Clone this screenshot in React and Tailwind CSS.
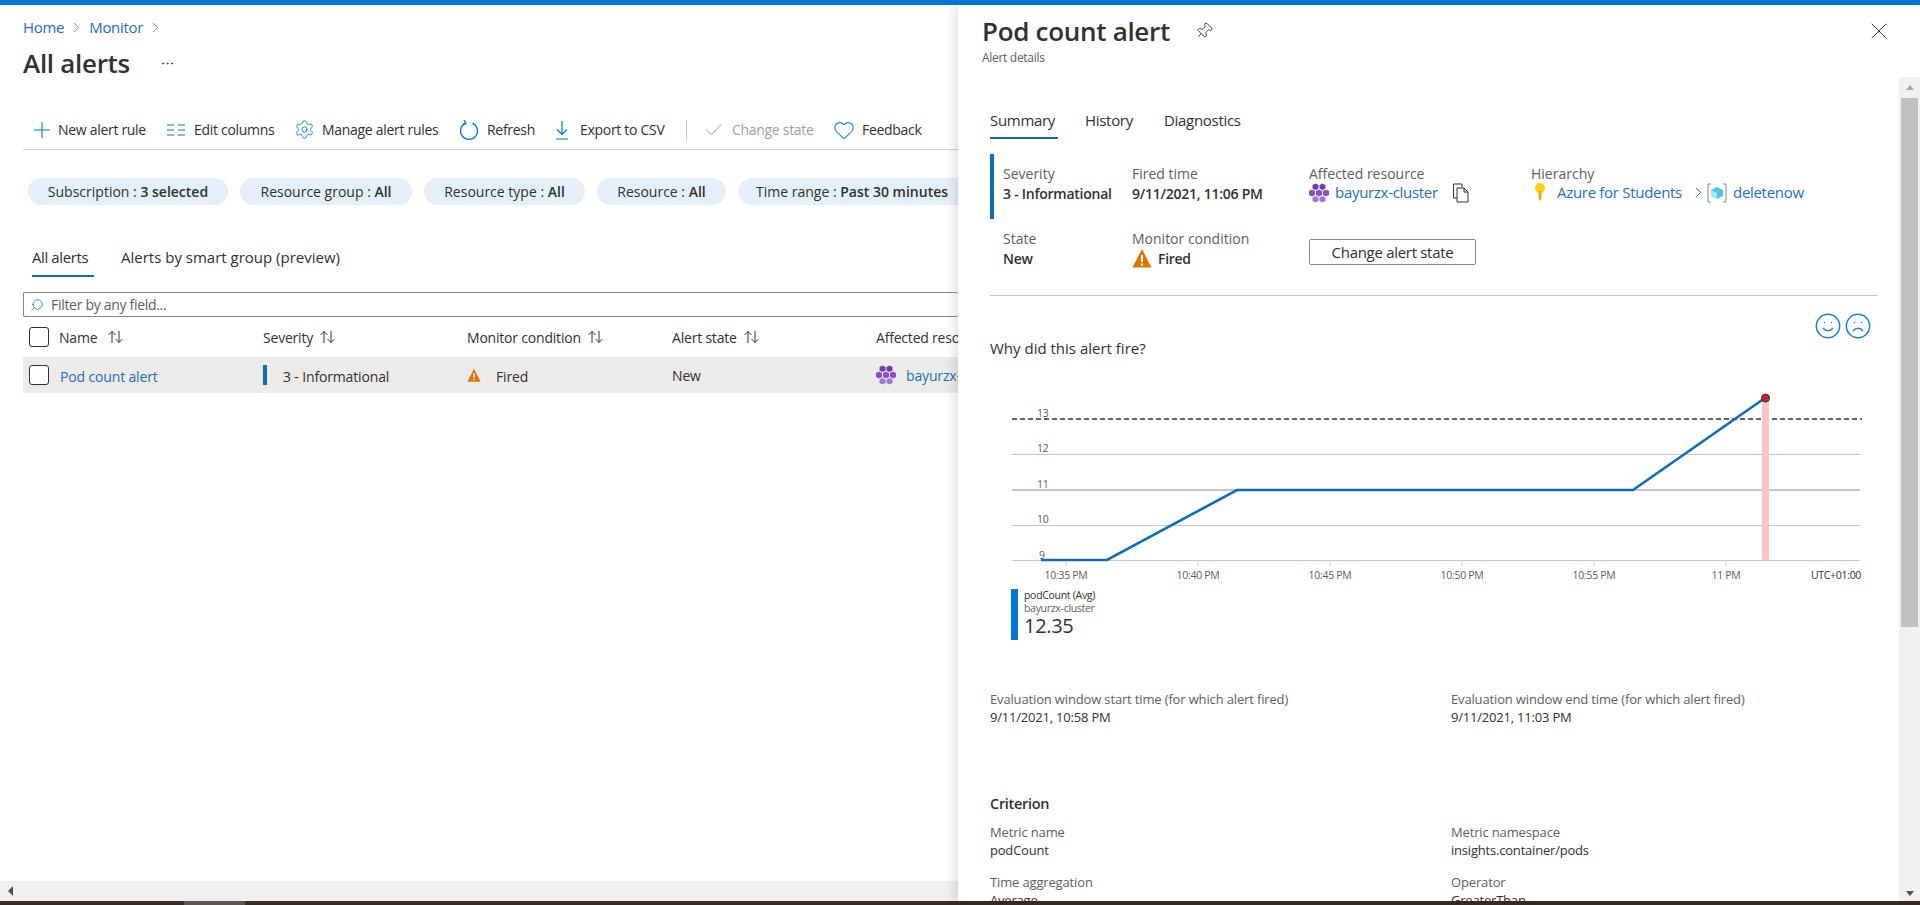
import React from "react";
import { Plus, Settings, Heart, Check, Pin, X, Smile, Frown, Search, ChevronRight, MoreHorizontal } from "lucide-react";

const Sort = () => (
  <svg width="18" height="14" viewBox="0 0 18 14" fill="none" stroke="#323130" strokeWidth="1" className="shrink-0">
    <path d="M5 13V1.5M1.5 5L5 1.5 8.5 5" />
    <path d="M12 1v11.5M8.5 9l3.5 3.5L15.5 9" />
  </svg>
);

const Warn = ({ s = 14 }) => (
  <svg width={s} height={s} viewBox="0 0 20 20" className="shrink-0">
    <path d="M10 1L19.5 19.5H.5z" fill="#db7500" />
    <path d="M10 7v7M10 15.5v2" stroke="#fff" strokeWidth="2" />
  </svg>
);

const Kube = ({ s = 20 }) => (
  <svg width={s} height={s} viewBox="0 0 20 20" className="shrink-0">
    <path d="M6.5 0.5L9.5 2v3.5L6.5 7 3.5 5.5V2z" fill="#6f3bb0" />
    <path d="M13.5 0.5L16.5 2v3.5L13.5 7 10.5 5.5V2z" fill="#6f3bb0" />
    <path d="M3 6.5L6 8v4L3 13.5 0 12V8z" fill="#8a4fc9" />
    <path d="M10 6.5L13 8v4l-3 1.5L7 12V8z" fill="#8a4fc9" />
    <path d="M17 6.5L20 8v4l-3 1.5L14 12V8z" fill="#8a4fc9" />
    <path d="M6.5 13L9.5 14.5V18L6.5 19.5 3.5 18v-3.5z" fill="#a277d8" />
    <path d="M13.5 13L16.5 14.5V18L13.5 19.5 10.5 18v-3.5z" fill="#a277d8" />
  </svg>
);

const Box = () => <div className="w-[20px] h-[20px] rounded-[3px] border border-[#323130] bg-white shrink-0" />;

const Pill = ({ label, value, w }) => (
  <div className={`h-[27px] rounded-full bg-[#e4f0f9] flex items-center text-[14px] tracking-normal text-[#323130] whitespace-nowrap shrink-0 ${w}`}>
    {label} :&nbsp;<span className="font-semibold">{value}</span>
  </div>
);

const Label = ({ children }) => <div className="h-[18px] leading-[18px] text-[14px] tracking-normal text-[#605e5c] whitespace-nowrap">{children}</div>;
const Small = ({ children }) => <div className="h-[18px] leading-[18px] text-[13px] tracking-[-0.15px] text-[#605e5c] whitespace-nowrap">{children}</div>;
const Value = ({ children }) => <div className="h-[18px] leading-[18px] text-[13px] tracking-[-0.2px] text-[#323130] whitespace-nowrap">{children}</div>;
const Strong = ({ children }) => <div className="h-[19px] leading-[21px] text-[14px] tracking-[-0.25px] font-semibold whitespace-nowrap">{children}</div>;

export default function App() {
  return (
    <div className="w-[1920px] h-[905px] flex flex-col overflow-hidden bg-white font-['Open_Sans','Liberation_Sans',sans-serif] tracking-[-0.3px] text-[#323130]">
      <div className="h-[5px] bg-[#0078d4] shrink-0" />
      <div className="flex-1 flex min-h-0">
        {/* Left blade */}
        <div className="w-[958px] shrink-0 flex flex-col overflow-hidden">
          <div className="flex-1 min-h-0 pl-[23px] overflow-hidden">
            <div className="mt-[13px] h-[18px] flex items-center gap-[4px] text-[15px] text-[#1f6fb5]">
              <span>Home</span>
              <ChevronRight size={17} strokeWidth={1} color="#605e5c" />
              <span>Monitor</span>
              <ChevronRight size={17} strokeWidth={1} color="#605e5c" />
            </div>
            <div className="mt-[9px] h-[36px] flex items-center">
              <span className="text-[26px] font-semibold w-[137px] whitespace-nowrap">All alerts</span>
              <MoreHorizontal size={15} strokeWidth={1.2} color="#323130" />
            </div>
            <div className="mt-[30px] h-[39px] border-b border-[#d2d0ce] flex items-center pl-[6px] pb-[1px] text-[14px] whitespace-nowrap">
              <Plus size={26} strokeWidth={1} color="#0078d4" />
              <span className="ml-[3px] w-[108px]">New alert rule</span>
              <svg width="20" height="14" viewBox="0 0 20 14" stroke="#0078d4" strokeWidth="1.2">
                <path d="M1 2h7M1 7h7M1 12h7M12 2h7M12 7h7M12 12h7" />
              </svg>
              <span className="ml-[8px] w-[100px]">Edit columns</span>
              <Settings size={21} strokeWidth={1} color="#0078d4" />
              <span className="ml-[7px] w-[137px]">Manage alert rules</span>
              <svg width="20" height="22" viewBox="0 0 20 22" fill="none" stroke="#0078d4" strokeWidth="1.3">
                <path d="M6.5 4.2A8.5 8.5 0 1 0 13.5 4.2" />
                <path d="M5 1l2 3.5L3.5 6" />
              </svg>
              <span className="ml-[8px] w-[66px]">Refresh</span>
              <svg width="18" height="20" viewBox="0 0 18 20" fill="none" stroke="#0078d4" strokeWidth="1.2">
                <path d="M9 1v13M4 9.5L9 14.5 14 9.5M3 19h12" />
              </svg>
              <span className="ml-[9px] w-[106px]">Export to CSV</span>
              <div className="w-px h-[20px] bg-[#c8c6c4] mr-[16px]" />
              <Check size={22} strokeWidth={0.9} color="#8a8886" />
              <span className="ml-[7px] w-[101px] text-[#a19f9d]">Change state</span>
              <Heart size={22} strokeWidth={1.1} color="#0078d4" />
              <span className="ml-[7px]">Feedback</span>
            </div>
            <div className="mt-[28px] flex gap-[12px] pl-[5px]">
              <Pill label="Subscription" value="3 selected" w="w-[200px] justify-center" />
              <Pill label="Resource group" value="All" w="w-[172px] justify-center" />
              <Pill label="Resource type" value="All" w="w-[161px] justify-center" />
              <Pill label="Resource" value="All" w="w-[129px] justify-center" />
              <Pill label="Time range" value="Past 30 minutes" w="w-[240px] pl-[18px]" />
            </div>
            <div className="mt-[40px] h-[32px] flex pl-[9px] gap-[27px] text-[15px] whitespace-nowrap">
              <div className="h-[32px] border-b-2 border-[#0f6cbd] font-medium leading-[24px] w-[62px] tracking-[-0.4px]">All alerts</div>
              <div className="leading-[24px] tracking-normal">Alerts by smart group (preview)</div>
            </div>
            <div className="mt-[15px] h-[25px] border border-[#8a8886] rounded-[2px] border-r-0 flex items-center pl-[6px] gap-[7px] text-[14px] text-[#605e5c]">
              <Search size={14} strokeWidth={1.3} color="#0078d4" className="-scale-x-100" />
              <span>Filter by any field...</span>
            </div>
            <div className="h-[40px] grid grid-cols-[234px_204px_205px_204px_1fr] items-center pl-[6px] text-[14px] tracking-[-0.2px] whitespace-nowrap">
              <div className="flex items-center">
                <Box />
                <span className="ml-[10px] w-[48px]">Name</span>
                <Sort />
              </div>
              <div className="flex items-center gap-[6px]"><span>Severity</span><Sort /></div>
              <div className="flex items-center gap-[6px]"><span>Monitor condition</span><Sort /></div>
              <div className="flex items-center gap-[6px]"><span>Alert state</span><Sort /></div>
              <div>Affected resource</div>
            </div>
            <div className="h-[36px] bg-[#edebe9] grid grid-cols-[234px_204px_205px_204px_1fr] items-center pl-[6px] text-[14px] tracking-[-0.15px] whitespace-nowrap">
              <div className="flex items-center">
                <Box />
                <span className="ml-[11px] pt-[2px] text-[#1f6fb5]">Pod count alert</span>
              </div>
              <div className="flex items-center">
                <div className="w-[4px] h-[20px] bg-[#0f6cbd] mr-[16px]" />
                <span className="pt-[2px]">3 - Informational</span>
              </div>
              <div className="flex items-center">
                <Warn s={14} />
                <span className="ml-[15px] pt-[2px]">Fired</span>
              </div>
              <div>New</div>
              <div className="flex items-center overflow-hidden">
                <Kube s={20} />
                <span className="ml-[10px] text-[#1f6fb5]">bayurzx-cluster</span>
              </div>
            </div>
          </div>
          <div className="h-[20px] bg-[#f0f0f0] shrink-0 flex items-center pl-[8px]">
            <div className="w-0 h-0 border-y-[5px] border-y-transparent border-r-[5px] border-r-[#505050]" />
          </div>
        </div>

        {/* Right blade */}
        <div className="flex-1 min-w-0 flex relative shadow-[-4px_0_10px_rgba(0,0,0,0.12)]">
          <div className="flex-1 min-w-0 overflow-hidden relative">
            <div className="pl-[24px] pr-[6px] pt-[8px]">
              <div className="h-[36px] flex items-center">
                <span className="text-[26px] font-semibold w-[213px] whitespace-nowrap">Pod count alert</span>
                <Pin size={18} strokeWidth={1.2} color="#323130" className="rotate-45" />
                <X size={28} strokeWidth={0.8} color="#323130" className="ml-auto" />
              </div>
              <div className="mt-[1px] h-[16px] leading-[16px] text-[12px] text-[#605e5c]">Alert details</div>
            </div>
            <div className="pl-[32px] pr-[64px]">
              <div className="mt-[42px] h-[31px] flex gap-[27px] text-[15px] leading-[24px] whitespace-nowrap">
                <div className="h-[31px] border-b-2 border-[#0f6cbd] font-medium w-[68px]">Summary</div>
                <div className="w-[49px]">History</div>
                <div className="ml-[3px]">Diagnostics</div>
              </div>
              <div className="mt-[15px] h-[65px] border-l-4 border-[#0f6cbd] pl-[9px] pt-[11px] flex">
                <div className="w-[129px]">
                  <Label>Severity</Label>
                  <Strong>3 - Informational</Strong>
                </div>
                <div className="w-[177px]">
                  <Label>Fired time</Label>
                  <Strong>9/11/2021, 11:06 PM</Strong>
                </div>
                <div className="w-[222px]">
                  <Label>Affected resource</Label>
                  <div className="h-[19px] flex items-center">
                    <Kube s={20} />
                    <span className="ml-[6px] text-[15px] text-[#1f6fb5] w-[117px] whitespace-nowrap">bayurzx-cluster</span>
                    <svg width="17" height="20" viewBox="0 0 17 20" fill="none" stroke="#323130" strokeWidth="1">
                      <path d="M10 4V1H1.5v14H5" />
                      <path d="M5 5h7l4 4v10H5z" />
                      <path d="M12 5v4h4" />
                    </svg>
                  </div>
                </div>
                <div>
                  <Label>Hierarchy</Label>
                  <div className="h-[19px] flex items-center whitespace-nowrap text-[15px] text-[#1f6fb5]">
                    <svg width="14" height="20" viewBox="0 0 14 20" className="ml-[2px] shrink-0">
                      <circle cx="7" cy="5" r="5" fill="#fcd116" />
                      <path d="M5.5 8h3v7l-1.5 3-1.5-3z" fill="#f2a900" />
                    </svg>
                    <span className="ml-[10px] w-[133px]">Azure for Students</span>
                    <ChevronRight size={17} strokeWidth={1.2} color="#323130" />
                    <svg width="20" height="20" viewBox="0 0 20 20" fill="none" className="shrink-0">
                      <path d="M4 1H1v18h3M16 1h3v18h-3" stroke="#8a8886" />
                      <path d="M10 4l6 3v6l-6 3-6-3V7z" fill="#50c7e8" />
                      <path d="M10 10v6l-6-3V7z" fill="#9cebff" />
                    </svg>
                    <span className="ml-[6px]">deletenow</span>
                  </div>
                </div>
              </div>
              <div className="mt-[11px] pl-[13px] flex h-[37px]">
                <div className="w-[129px]">
                  <Label>State</Label>
                  <Strong>New</Strong>
                </div>
                <div className="w-[177px]">
                  <Label>Monitor condition</Label>
                  <div className="h-[19px] flex items-center text-[14px] font-semibold">
                    <Warn s={20} />
                    <span className="ml-[6px] pt-[2px]">Fired</span>
                  </div>
                </div>
                <div className="mt-[9px] w-[167px] h-[26px] border border-[#8a8886] rounded-[2px] flex items-center justify-center text-[15px]">
                  Change alert state
                </div>
              </div>
              <div className="mt-[28px] h-px bg-[#c8c6c4] w-[887px]" />
              <div className="mt-[18px] h-[24px] w-[882px] flex justify-end gap-[2px]">
                <Smile size={28} strokeWidth={1.3} color="#1f7fc7" className="-mt-[2px]" />
                <Frown size={28} strokeWidth={1.3} color="#1f7fc7" className="-mt-[2px]" />
              </div>
              <div className="mt-[2px] h-[18px] leading-[16px] text-[15px] tracking-normal">Why did this alert fire?</div>
              <svg
                className="block mt-[32px] -ml-[17px] font-['Open_Sans','Liberation_Sans',sans-serif]"
                width="897"
                height="195"
                viewBox="973 390 897 195"
              >
                <g stroke="#c8c6c4" strokeWidth="1">
                  <path d="M1012 454.5H1860M1012 525.5H1860M1012 560.5H1860" />
                  <path d="M1012 490H1860" strokeWidth="2" />
                  <path d="M1066 560v6M1198 560v6M1330 560v6M1462 560v6M1594 560v6M1726 560v6" />
                </g>
                <path d="M1012 419H1862" stroke="#323130" strokeWidth="1.6" strokeDasharray="5 3" />
                <rect x="1762" y="398" width="7" height="162" fill="#fbc4c4" />
                <path d="M1041 560H1107L1237 490H1633L1765 398" fill="none" stroke="#0f6cbd" strokeWidth="2.6" />
                <circle cx="1765.5" cy="398" r="4" fill="#c1272d" stroke="#323130" />
                <g fontSize="10.5" fill="#605e5c" letterSpacing="-0.3">
                  <text x="1037" y="417">13</text>
                  <text x="1037" y="452">12</text>
                  <text x="1037" y="488">11</text>
                  <text x="1037" y="523">10</text>
                  <text x="1039" y="559">9</text>
                  <text x="1066" y="579" textAnchor="middle">10:35 PM</text>
                  <text x="1198" y="579" textAnchor="middle">10:40 PM</text>
                  <text x="1330" y="579" textAnchor="middle">10:45 PM</text>
                  <text x="1462" y="579" textAnchor="middle">10:50 PM</text>
                  <text x="1594" y="579" textAnchor="middle">10:55 PM</text>
                  <text x="1726" y="579" textAnchor="middle">11 PM</text>
                  <text x="1836" y="579" textAnchor="middle" fill="#323130">UTC+01:00</text>
                </g>
              </svg>
              <div className="mt-[4px] ml-[21px] h-[51px] border-l-[7px] border-[#0078d4] pl-[6px] whitespace-nowrap">
                <div className="h-[13px] leading-[13px] mt-[2px] text-[10.5px]">podCount (Avg)</div>
                <div className="h-[12px] leading-[12px] text-[10.5px] text-[#605e5c]">bayurzx-cluster</div>
                <div className="h-[24px] leading-[24px] text-[20px]">12.35</div>
              </div>
              <div className="mt-[50px] grid grid-cols-[461px_1fr]">
                <div>
                  <Small>Evaluation window start time (for which alert fired)</Small>
                  <Value>9/11/2021, 10:58 PM</Value>
                </div>
                <div>
                  <Small>Evaluation window end time (for which alert fired)</Small>
                  <Value>9/11/2021, 11:03 PM</Value>
                </div>
              </div>
              <div className="mt-[69px] h-[18px] leading-[18px] text-[14.5px] font-semibold">Criterion</div>
              <div className="mt-[10px] grid grid-cols-[461px_1fr] gap-y-[14px]">
                <div>
                  <Small>Metric name</Small>
                  <Value>podCount</Value>
                </div>
                <div>
                  <Small>Metric namespace</Small>
                  <Value>insights.container/pods</Value>
                </div>
                <div>
                  <Small>Time aggregation</Small>
                  <Value>Average</Value>
                </div>
                <div>
                  <Small>Operator</Small>
                  <Value>GreaterThan</Value>
                </div>
              </div>
            </div>
          </div>
          <div className="w-[21px] shrink-0 mt-[72px] bg-[#f0f0f0] flex flex-col items-center">
            <div className="h-[21px] flex items-center justify-center">
              <div className="w-0 h-0 border-x-[4px] border-x-transparent border-b-[5px] border-b-[#a6a6a6]" />
            </div>
            <div className="w-[17px] h-[529px] bg-[#c1c1c1]" />
            <div className="flex-1" />
            <div className="h-[16px] flex items-center justify-center">
              <div className="w-0 h-0 border-x-[4px] border-x-transparent border-t-[5px] border-t-[#505050]" />
            </div>
          </div>
        </div>
      </div>
      <div className="h-[4px] bg-[#3a2a22] shrink-0 pl-[184px]">
        <div className="w-[61px] h-[4px] bg-[#5f5550]" />
      </div>
    </div>
  );
}
